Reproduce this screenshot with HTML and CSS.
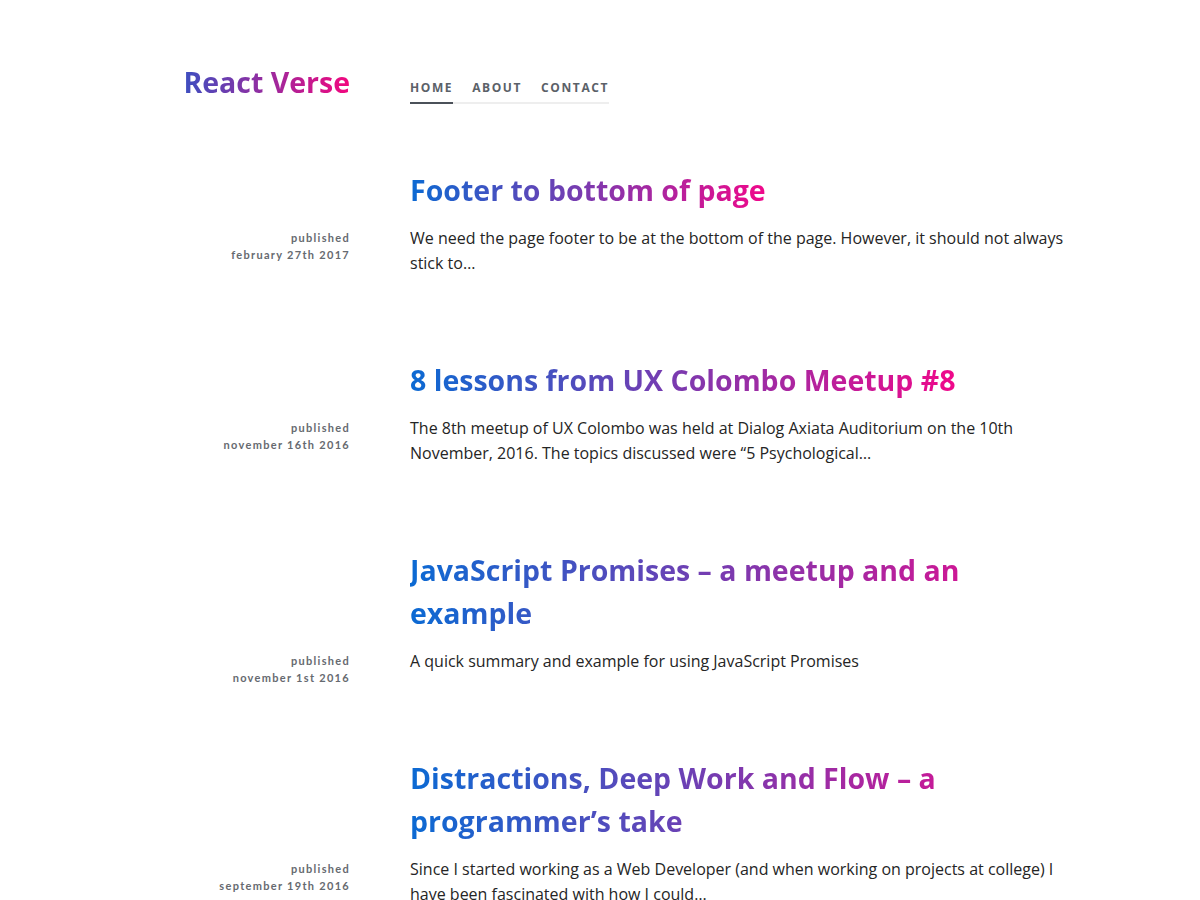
FILE: index.html
```html
<!DOCTYPE html>
<html lang="en">
<head>
<meta charset="utf-8">
<title>React Verse</title>
<link rel="stylesheet" href="styles.css">
</head>
<body>
<div class="page">
  <header class="header">
    <div class="brand"><a class="logo" href="#">React Verse</a></div>
    <nav class="nav">
      <a class="nav-link active" href="#">Home</a>
      <a class="nav-link" href="#">About</a>
      <a class="nav-link" href="#">Contact</a>
    </nav>
  </header>
  <main class="posts">
    <article class="post">
      <h2 class="post-title"><a href="#">Footer to bottom of page</a></h2>
      <div class="meta"><span>published</span><span>february 27th 2017</span></div>
      <p class="excerpt">We need the page footer to be at the bottom of the page. However, it should not always stick to…</p>
    </article>
    <article class="post">
      <h2 class="post-title"><a href="#">8 lessons from UX Colombo Meetup #8</a></h2>
      <div class="meta"><span>published</span><span>november 16th 2016</span></div>
      <p class="excerpt">The 8th meetup of UX Colombo was held at Dialog Axiata Auditorium on the 10th November, 2016. The topics discussed were “5 Psychological…</p>
    </article>
    <article class="post">
      <h2 class="post-title"><a href="#">JavaScript Promises – a meetup and an example</a></h2>
      <div class="meta"><span>published</span><span>november 1st 2016</span></div>
      <p class="excerpt">A quick summary and example for using JavaScript Promises</p>
    </article>
    <article class="post">
      <h2 class="post-title"><a href="#">Distractions, Deep Work and Flow – a programmer’s take</a></h2>
      <div class="meta"><span>published</span><span>september 19th 2016</span></div>
      <p class="excerpt">Since I started working as a Web Developer (and when working on projects at college) I have been fascinated with how I could…</p>
    </article>
  </main>
</div>
</body>
</html>
```
FILE: styles.css
```css
* { box-sizing: border-box; }
html, body { margin: 0; padding: 0; background: #fff; }
body {
  font-family: "Open Sans", "Liberation Sans", sans-serif;
  color: #222;
}
.page {
  width: 980px;
  margin: 0 auto;
  padding-top: 62px;
}
.header {
  display: grid;
  grid-template-columns: 240px 680px;
  column-gap: 60px;
  align-items: start;
}
.brand { text-align: right; }
.logo {
  display: inline-block;
  font-size: 28.5px;
  font-weight: 700;
  line-height: 40px;
  text-decoration: none;
  background: linear-gradient(to right, #3d4fc0, #f2077e);
  -webkit-background-clip: text;
  background-clip: text;
  color: transparent;
}
.nav {
  display: inline-flex;
  justify-self: start;
  gap: 19px;
  margin-top: 17px;
  border-bottom: 2px solid #eeeeee;
}
.nav-link {
  font-size: 12px;
  font-weight: 700;
  letter-spacing: 1.6px;
  text-transform: uppercase;
  color: #5b6168;
  text-decoration: none;
  line-height: 18px;
  padding-bottom: 5px;
  margin-bottom: -2px;
  border-bottom: 2px solid transparent;
}
.nav-link.active { border-bottom-color: #4b5159; }
.posts { margin-top: 65px; }
.post {
  display: grid;
  grid-template-columns: 240px 680px;
  column-gap: 60px;
  margin-bottom: 83px;
}
.post-title {
  grid-column: 2;
  margin: 0 0 14px;
  font-size: 28.5px;
  font-weight: 700;
  line-height: 43px;
}
.post-title a {
  display: inline-block;
  max-width: 650px;
  text-decoration: none;
  background: linear-gradient(to right, #0b6ad3, #f0088a);
  -webkit-background-clip: text;
  background-clip: text;
  color: transparent;
}
.meta {
  grid-column: 1;
  display: flex;
  flex-direction: column;
  align-items: flex-end;
  padding-top: 3px;
  margin-bottom: -16px;
  font-family: "Lato", "Open Sans", sans-serif;
  font-size: 11px;
  font-weight: 700;
  letter-spacing: 1.3px;
  line-height: 17px;
  color: #666a70;
}
.excerpt {
  grid-column: 2;
  margin: 0;
  font-size: 16px;
  line-height: 25px;
  color: #252525;
}
```
